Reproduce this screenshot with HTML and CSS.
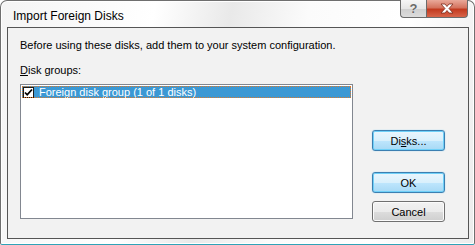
FILE: index.html
```html
<!DOCTYPE html>
<html lang="en">

<head>
  <meta charset="UTF-8" />
  <title>Import Foreign Disks</title>
  <link rel="stylesheet" href="styles.css">
</head>

<body>
  <div class="window">
    <!-- Title bar -->
    <header class="titlebar">
      <span class="title">Import Foreign Disks</span>
      <div class="caption-buttons">
        <span class="cap-btn help">?</span>
        <span class="cap-btn close">
          <svg width="16" height="11" viewBox="0 0 16 11">
            <path d="M2 1h4l2 2.5 2-2.5h4l-4 4.5 4 4.5h-4l-2-2.5-2 2.5h-4l4-4.5z" fill="#fff" stroke="#7a2a1a" stroke-width="0.8" />
          </svg>
        </span>
      </div>
    </header>

    <!-- Client area -->
    <div class="client">
      <p class="intro">Before using these disks, add them to your system configuration.</p>
      <div class="label"><u>D</u>isk groups:</div>

      <div class="content">
        <div class="listbox">
          <div class="list-row selected">
            <span class="checkbox">
              <svg width="9" height="9" viewBox="0 0 9 9">
                <path d="M1 4.5l2.2 2.3L8 1.5" fill="none" stroke="#000" stroke-width="1.8" />
              </svg>
            </span>
            <span>Foreign disk group (1 of 1 disks)</span>
          </div>
        </div>

        <div class="button-col">
          <button class="btn default">Di<u>s</u>ks...</button>
          <button class="btn default ok">OK</button>
          <button class="btn">Cancel</button>
        </div>
      </div>
    </div>
  </div>
</body>

</html>
```

FILE: styles.css
```css
* {
  box-sizing: border-box;
  margin: 0;
  padding: 0;
}

html,
body {
  width: 475px;
  height: 245px;
  overflow: hidden;
  background-color: #ffffff;
  font-family: 'Liberation Sans', Arial, sans-serif;
  font-size: 11px;
  color: #000;
}

.window {
  width: 475px;
  height: 245px;
  display: flex;
  flex-direction: column;
  border: 1px solid #6f6f6f;
  border-bottom-color: #2fa3b8;
  border-radius: 7px 7px 2px 2px;
  background: linear-gradient(100deg, #f4f4f4 0%, #ffffff 30%, #e9e9e9 45%, #fbfbfb 60%, #ffffff 80%, #ececec 100%);
  box-shadow: inset 0 0 0 1px #ffffff;
}

/* Title bar */
.titlebar {
  height: 26px;
  display: flex;
  justify-content: space-between;
  align-items: flex-start;
  padding-left: 12px;
  padding-right: 6px;
}

.title {
  font-size: 12px;
  margin-top: 8px;
  color: #000;
}

.caption-buttons {
  display: flex;
  margin-top: -1px;
}

.cap-btn {
  height: 18px;
  display: flex;
  justify-content: center;
  align-items: center;
  border: 1px solid #6b6b6b;
  border-top: none;
}

.help {
  width: 26px;
  border-radius: 0 0 0 4px;
  border-right: none;
  background: linear-gradient(#f6f6f6 0%, #e6e6e6 50%, #cfcfcf 51%, #dcdcdc 100%);
  color: #6a6a6a;
  font-size: 13px;
  font-weight: bold;
  text-shadow: 0 0 1px #fff;
}

.close {
  width: 42px;
  border-radius: 0 0 4px 0;
  background: linear-gradient(#e9a99a 0%, #d4735e 45%, #c23a1f 55%, #d8654a 100%);
}

/* Client area */
.client {
  flex: 1;
  margin: 0 5px 5px 6px;
  border: 1px solid #555;
  background-color: #f2f2f2;
  padding: 10px 22px 0 12px;
  display: flex;
  flex-direction: column;
}

.intro {
  line-height: 14px;
}

.label {
  margin-top: 11px;
  line-height: 14px;
}

.content {
  display: flex;
  margin-top: 7px;
  gap: 19px;
}

.listbox {
  width: 333px;
  height: 135px;
  background-color: #fff;
  border: 1px solid #828790;
  padding: 1px;
}

.list-row {
  height: 12px;
  display: flex;
  align-items: center;
  gap: 5px;
  padding-left: 1px;
  line-height: 12px;
}

.list-row.selected {
  background-color: #3b98d4;
  color: #fff;
  outline: 1px dotted #d9782c;
  outline-offset: -1px;
}

.checkbox {
  width: 11px;
  height: 11px;
  display: flex;
  justify-content: center;
  align-items: center;
  background-color: #fff;
  border: 1px solid #1c1c1c;
}

/* Buttons */
.button-col {
  display: flex;
  flex-direction: column;
  padding-top: 46px;
}

.btn {
  width: 73px;
  height: 21px;
  margin-bottom: 8px;
  font-family: 'Liberation Sans', Arial, sans-serif;
  font-size: 11px;
  color: #000;
  border: 1px solid #707070;
  border-radius: 3px;
  background: linear-gradient(#f2f2f2 0%, #ebebeb 50%, #dddddd 51%, #cfcfcf 100%);
  box-shadow: inset 0 0 0 1px #fbfbfb;
}

.btn.default {
  border-color: #3c7fb1;
  background: linear-gradient(#eaf6fd 0%, #d9f0fc 50%, #bee6fd 51%, #a7d9f5 100%);
  box-shadow: inset 0 0 0 1px #6fd0f8, 0 0 1px #5fc0f0;
}

.btn.ok {
  margin-top: 13px;
}
```
